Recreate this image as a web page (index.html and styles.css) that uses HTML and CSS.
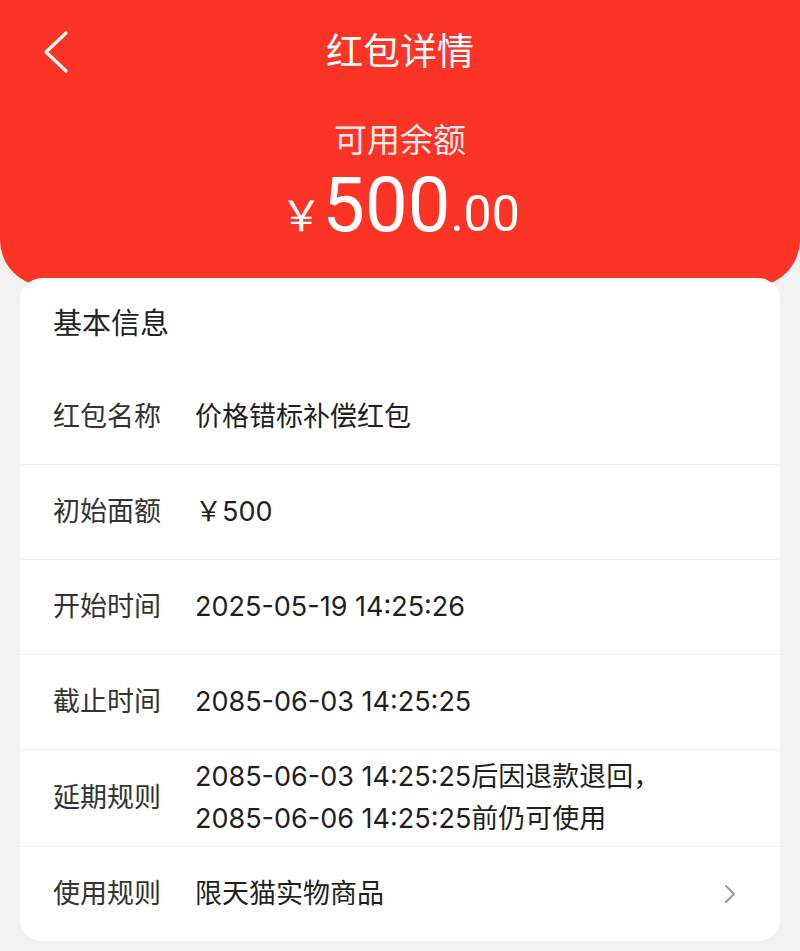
FILE: index.html
```html
<!DOCTYPE html>
<html lang="zh-CN">
<head>
<meta charset="utf-8">
<title>红包详情</title>
<link rel="stylesheet" href="styles.css">
</head>
<body>
<header class="hero">
  <div class="nav">
    <a class="back" href="#" aria-label="返回">
      <svg width="30" height="44" viewBox="0 0 30 44"><path d="M24 3 L4 22 L24 41" fill="none" stroke="#fff" stroke-width="3.2" stroke-linecap="round" stroke-linejoin="round"/></svg>
    </a>
    <h1 class="title">红包详情</h1>
    <span class="nav-spacer"></span>
  </div>
  <div class="balance-label">可用余额</div>
  <div class="amount"><span class="yen">￥</span><span class="int">500</span><span class="dec">.00</span></div>
</header>
<main class="card">
  <div class="card-head">基本信息</div>
  <div class="row"><span class="label">红包名称</span><span class="value">价格错标补偿红包</span></div>
  <div class="row"><span class="label">初始面额</span><span class="value">￥500</span></div>
  <div class="row"><span class="label">开始时间</span><span class="value">2025-05-19 14:25:26</span></div>
  <div class="row"><span class="label">截止时间</span><span class="value">2085-06-03 14:25:25</span></div>
  <div class="row"><span class="label">延期规则</span><span class="value">2085-06-03 14:25:25后因退款退回，<br>2085-06-06 14:25:25前仍可使用</span></div>
  <div class="row last"><span class="label">使用规则</span><span class="value">限天猫实物商品</span>
    <svg class="arrow" width="14" height="22" viewBox="0 0 14 22"><path d="M3 3 L11 11 L3 19" fill="none" stroke="#999" stroke-width="2" stroke-linecap="round" stroke-linejoin="round"/></svg>
  </div>
</main>
</body>
</html>
```
FILE: styles.css
```css
* { box-sizing: border-box; }
html, body { margin: 0; padding: 0; }
body {
  background: #f2f2f2;
  font-family: "Inter", "Noto Sans CJK SC", sans-serif;
  width: 800px;
  min-height: 951px;
  color: #222;
}
.hero {
  background: #fc3426;
  height: 286px;
  border-radius: 0 0 46px 46px;
  color: #fff;
  padding-top: 24px;
}
.nav {
  display: grid;
  grid-template-columns: 120px 1fr 120px;
  align-items: center;
  height: 56px;
}
.back {
  display: flex;
  align-items: center;
  padding-left: 42px;
  height: 56px;
}
.back svg { display: block; }
.title {
  margin: 0;
  text-align: center;
  font-size: 37px;
  font-weight: 400;
  line-height: 56px;
}
.balance-label {
  margin-top: 38px;
  text-align: center;
  font-size: 33px;
  line-height: 44px;
  color: rgba(255,255,255,0.92);
}
.amount {
  display: flex;
  justify-content: center;
  align-items: baseline;
  line-height: 84px;
  margin-top: 1px;
}
.yen { font-size: 42px; font-family: "Noto Sans CJK SC", sans-serif; margin-right: 0; }
.int { font-size: 76px; font-family: "Roboto", sans-serif; }
.dec { font-size: 50px; font-family: "Roboto", sans-serif; }
.card {
  position: relative;
  margin: -8px 20px 0;
  background: #fff;
  border-radius: 22px;
  overflow: hidden;
}
.card-head {
  height: 92px;
  padding: 26px 0 0 33px;
  font-size: 29px;
  line-height: 40px;
  color: #222;
}
.row {
  display: flex;
  align-items: center;
  min-height: 95px;
  padding: 6px 43px 6px 33px;
  border-bottom: 1px solid #efefef;
  font-size: 27px;
  line-height: 42px;
}
.row.last { border-bottom: none; min-height: 94px; }
.label { flex: 0 0 142px; color: #333; }
.value { flex: 1; color: #1f1f1f; }
.arrow { flex: 0 0 auto; display: block; }
```
